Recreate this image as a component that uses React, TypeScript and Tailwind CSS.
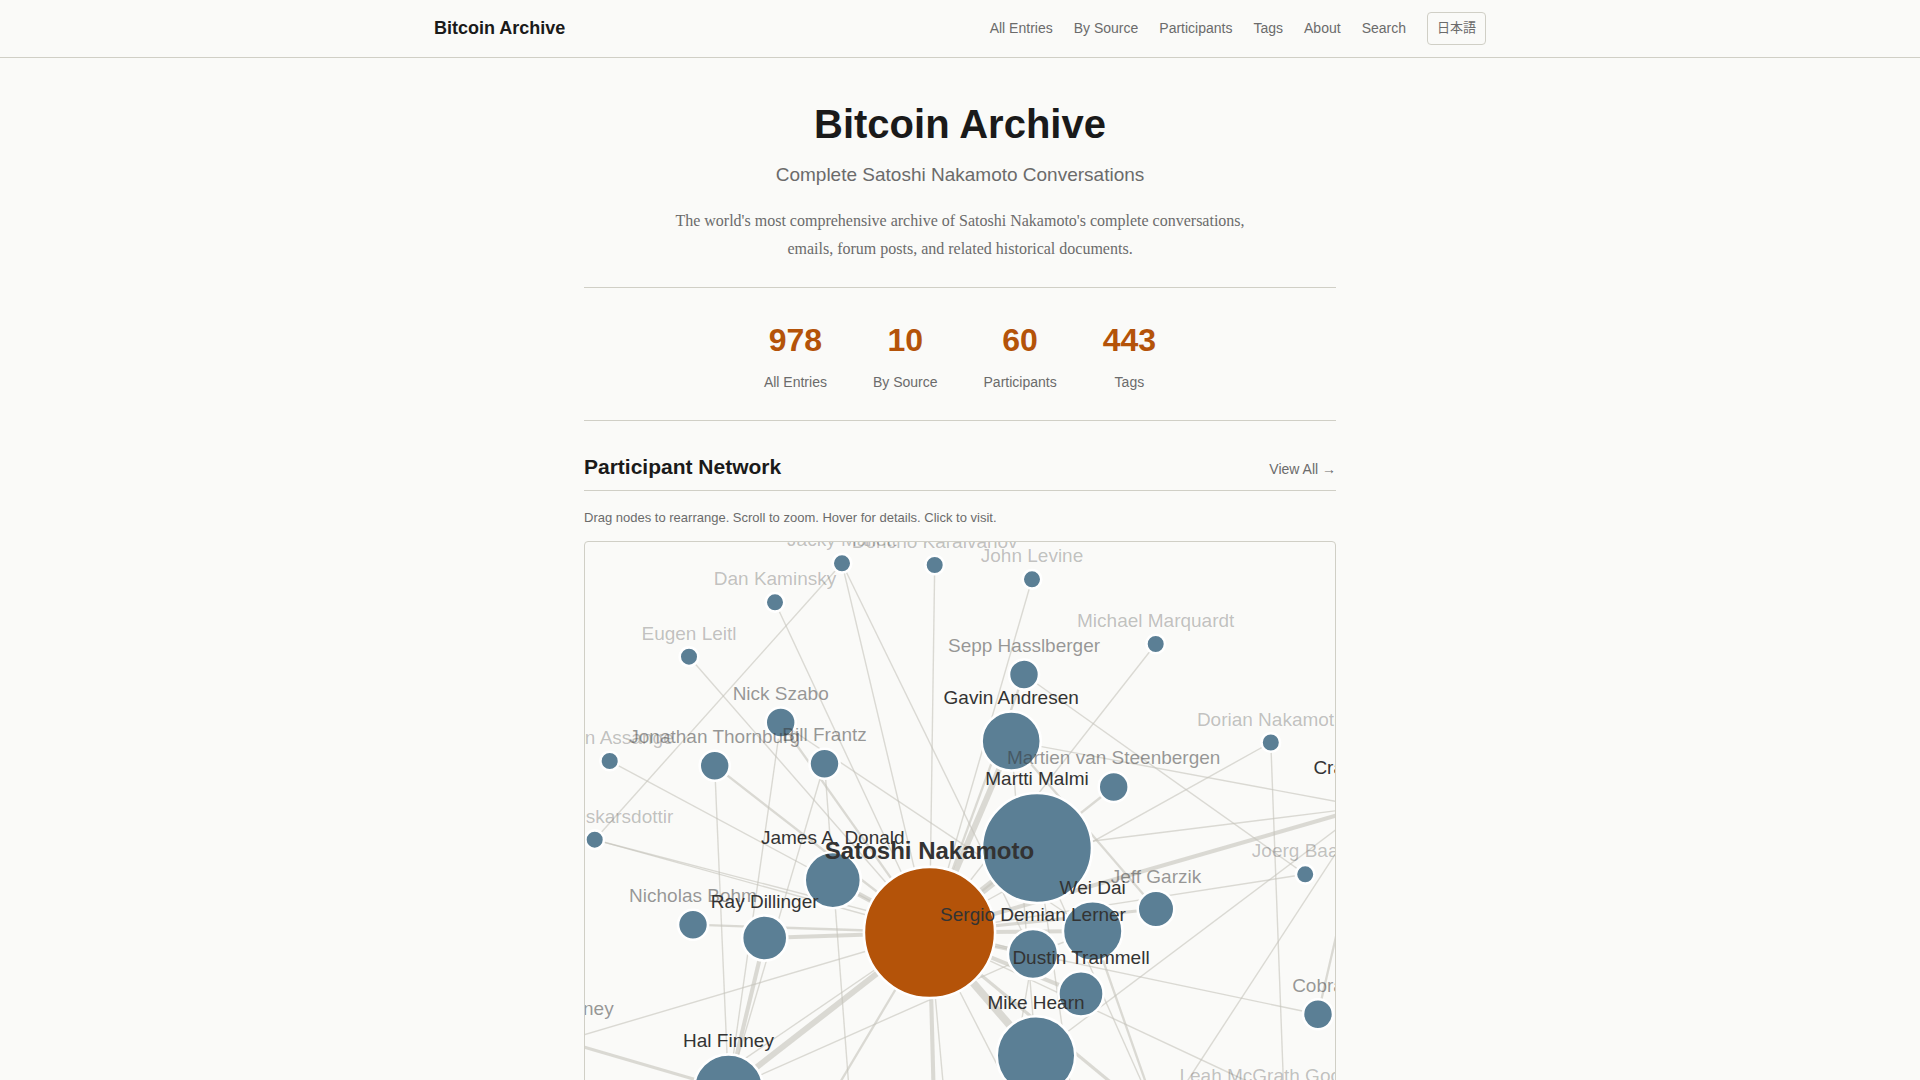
import React from 'react';

type NetworkNode = {
  id: string;
  name: string;
  x: number;
  y: number;
  r: number;
  main?: boolean;
};

// id of a node, or a bare point for neighbours that sit outside the canvas
type End = string | [number, number];

const navItems = ['All Entries', 'By Source', 'Participants', 'Tags', 'About', 'Search'];

const stats = [
  { value: 978, label: 'All Entries' },
  { value: 10, label: 'By Source' },
  { value: 60, label: 'Participants' },
  { value: 443, label: 'Tags' },
];

const nodes: NetworkNode[] = [
  { id: 'jacky', name: 'Jacky Mallett', x: 257, y: 21.3, r: 8 },
  { id: 'doncho', name: 'Doncho Karaivanov', x: 349.7, y: 23, r: 8 },
  { id: 'levine', name: 'John Levine', x: 447, y: 37.3, r: 8 },
  { id: 'dan', name: 'Dan Kaminsky', x: 190, y: 60.3, r: 8 },
  { id: 'eugen', name: 'Eugen Leitl', x: 104, y: 114.7, r: 8 },
  { id: 'marquardt', name: 'Michael Marquardt', x: 570.7, y: 102, r: 8 },
  { id: 'dorian', name: 'Dorian Nakamoto', x: 685.8, y: 200.5, r: 8 },
  { id: 'assange', name: 'Julian Assange', x: 24.7, y: 219, r: 8 },
  { id: 'oskar', name: 'Smári Óskarsdottir', x: 9.7, y: 297.7, r: 8 },
  { id: 'joerg', name: 'Joerg Baach', x: 720.2, y: 332.3, r: 8 },
  { id: 'leah', name: 'Leah McGrath Goodman', x: 699, y: 556.5, r: 8 },
  { id: 'sepp', name: 'Sepp Hasslberger', x: 439, y: 132.5, r: 13.7 },
  { id: 'nick', name: 'Nick Szabo', x: 195.7, y: 180.5, r: 13.7 },
  { id: 'jonathan', name: 'Jonathan Thornburg', x: 129.7, y: 223.7, r: 13.7 },
  { id: 'bill', name: 'Bill Frantz', x: 239.5, y: 221.7, r: 13.7 },
  { id: 'martien', name: 'Martien van Steenbergen', x: 528.7, y: 245, r: 13.7 },
  { id: 'bohm', name: 'Nicholas Bohm', x: 108, y: 382.7, r: 13.7 },
  { id: 'cobra', name: 'Cobra', x: 733, y: 472.3, r: 13.7 },
  { id: 'fran', name: 'Fran Finney', x: -22, y: 499, r: 17 },
  { id: 'jeff', name: 'Jeff Garzik', x: 571, y: 367, r: 17 },
  { id: 'ray', name: 'Ray Dillinger', x: 179.7, y: 396, r: 21.3 },
  { id: 'dustin', name: 'Dustin Trammell', x: 496, y: 451.9, r: 21.3 },
  { id: 'sergio', name: 'Sergio Demian Lerner', x: 448, y: 412, r: 23.8 },
  { id: 'craig', name: 'Craig Wright', x: 781, y: 265, r: 24 },
  { id: 'james', name: 'James A. Donald', x: 247.8, y: 338.1, r: 26.8 },
  { id: 'gavin', name: 'Gavin Andresen', x: 426.2, y: 199, r: 28.3 },
  { id: 'wei', name: 'Wei Dai', x: 507.7, y: 389, r: 28.5 },
  { id: 'hal', name: 'Hal Finney', x: 143.5, y: 547.2, r: 33.5 },
  { id: 'mike', name: 'Mike Hearn', x: 451, y: 513.5, r: 38 },
  { id: 'martti', name: 'Martti Malmi', x: 452, y: 306, r: 53.7 },
  { id: 'satoshi', name: 'Satoshi Nakamoto', x: 344.5, y: 390.5, r: 64.3, main: true },
];

const links: [End, End, number][] = [
  ['satoshi', 'doncho', 1],
  ['satoshi', 'jacky', 1],
  ['satoshi', 'levine', 1],
  ['satoshi', 'dan', 1],
  ['satoshi', 'eugen', 1],
  ['satoshi', 'marquardt', 1],
  ['satoshi', 'dorian', 1],
  ['satoshi', 'assange', 1],
  ['satoshi', 'oskar', 1],
  ['satoshi', 'joerg', 1],
  ['satoshi', 'leah', 1],
  ['satoshi', 'cobra', 1],
  ['satoshi', 'fran', 1],
  ['satoshi', 'sepp', 2],
  ['satoshi', 'nick', 2],
  ['satoshi', 'jonathan', 2],
  ['satoshi', 'martien', 2],
  ['satoshi', 'bohm', 2],
  ['satoshi', 'jeff', 3],
  ['satoshi', 'ray', 4],
  ['satoshi', 'dustin', 4],
  ['satoshi', 'sergio', 4],
  ['satoshi', 'craig', 4],
  ['satoshi', 'james', 5],
  ['satoshi', 'wei', 4],
  ['satoshi', 'gavin', 6],
  ['satoshi', 'hal', 6],
  ['satoshi', 'mike', 8],
  ['satoshi', 'martti', 8],
  ['satoshi', [575, 581], 3],
  ['satoshi', [351, 640], 4],
  ['satoshi', [367, 640], 1],
  ['satoshi', [470, 636], 1],
  ['satoshi', [198, 636], 2],
  ['satoshi', [0, 626], 1],
  ['jacky', 'oskar', 1],
  ['jacky', 'sergio', 1],
  ['oskar', 'sergio', 1],
  ['nick', 'hal', 1],
  ['nick', 'wei', 1],
  ['bill', 'hal', 1],
  ['bill', [271, 640], 1],
  ['jonathan', 'hal', 1],
  ['sepp', 'joerg', 1],
  ['gavin', 'craig', 1],
  ['gavin', 'mike', 1],
  ['gavin', 'jeff', 2],
  ['martti', 'craig', 1],
  ['martti', [499, 640], 1],
  ['martti', [575, 581], 1],
  ['wei', [575, 581], 2],
  ['sergio', 'wei', 1],
  ['sergio', 'hal', 1],
  ['sergio', [409, 640], 1],
  ['mike', 'craig', 1],
  ['craig', 'cobra', 2],
  ['craig', [575, 581], 1],
  ['dorian', 'leah', 1],
  ['ray', 'hal', 4],
  ['hal', 'fran', 3],
];

const byId = new Map(nodes.map((n) => [n.id, n]));

function locate(end: End): [number, number] {
  if (typeof end !== 'string') return end;
  const n = byId.get(end)!;
  return [n.x, n.y];
}

function labelOpacity(r: number) {
  if (r < 10) return 0.3;
  if (r < 20) return 0.5;
  return 1;
}

function SiteHeader() {
  return (
    <header className="border-b border-[#d0cfc6]">
      <div className="max-w-[1100px] mx-auto px-6 py-3 flex items-center justify-between">
        <a href="#" className="pb-0.5 text-lg leading-6 font-bold text-[#1a1a1a]">Bitcoin Archive</a>
        <nav className="flex items-center gap-[21px] text-sm text-[#6b6b6b]">
          {navItems.map((item) => (
            <a key={item} href="#" className="pb-0.5 hover:text-[#1a1a1a]">{item}</a>
          ))}
          <button className="h-[33px] px-[9px] text-[13px] border border-[#d0cfc6] rounded">日本語</button>
        </nav>
      </div>
    </header>
  );
}

function NetworkGraph() {
  return (
    <div className="mt-[13px] h-[602px] border border-[#d0cfc6] rounded overflow-hidden">
      <svg className="block w-full h-full" role="img" aria-label="Participant Network">
        <g stroke="#c4c3ba" strokeOpacity={0.6}>
          {links.map(([from, to, width], i) => {
            const [x1, y1] = locate(from);
            const [x2, y2] = locate(to);
            return <line key={i} x1={x1} y1={y1} x2={x2} y2={y2} strokeWidth={width * 0.9 + 0.5} />;
          })}
        </g>
        <g stroke="#ffffff" strokeWidth={2.6}>
          {nodes.map((n) => (
            <circle key={n.id} cx={n.x} cy={n.y} r={n.r + 1.3} fill={n.main ? '#b45309' : '#5b7f95'} className="cursor-pointer" />
          ))}
        </g>
        <g fill="#333333" textAnchor="middle">
          {nodes.map((n) => (
            <text
              key={n.id}
              x={n.x}
              y={n.y - n.r - 9}
              fillOpacity={labelOpacity(n.r)}
              className={n.main ? 'text-2xl font-bold' : 'text-[19px]'}
            >
              {n.name}
            </text>
          ))}
        </g>
      </svg>
    </div>
  );
}

export default function App() {
  return (
    <div className="min-h-screen bg-[#fafaf8] text-[#1a1a1a] font-['Liberation_Sans','Noto_Sans_CJK_JP',sans-serif]">
      <SiteHeader />
      <main className="max-w-[800px] mx-auto px-6 pt-10 pb-16">
        <section className="pb-6 border-b border-[#d0cfc6] text-center">
          <h1 className="text-[40px] leading-[52px] font-bold">Bitcoin Archive</h1>
          <p className="mt-[11px] text-[19px] leading-7 text-[#6b6b6b]">Complete Satoshi Nakamoto Conversations</p>
          <p className="mt-[18px] max-w-[600px] mx-auto text-base leading-7 text-[#6b6b6b] font-['Liberation_Serif',serif]">
            The world's most comprehensive archive of Satoshi Nakamoto's complete conversations, emails, forum posts, and related historical documents.
          </p>
        </section>

        <section className="pt-8 pb-7 border-b border-[#d0cfc6] flex justify-center gap-[46px] text-center">
          {stats.map((s) => (
            <div key={s.label}>
              <div className="text-[32px] leading-10 font-bold text-[#b45309]">{s.value}</div>
              <div className="mt-3 text-sm leading-5 text-[#6b6b6b]">{s.label}</div>
            </div>
          ))}
        </section>

        <section className="mt-[31px]">
          <div className="pb-2 flex items-baseline justify-between border-b border-[#d0cfc6]">
            <h2 className="text-[21px] leading-[30px] font-bold">Participant Network</h2>
            <a href="#" className="text-sm leading-5 text-[#6b6b6b]">View All →</a>
          </div>
          <p className="mt-[17px] text-[13px] leading-5 text-[#6b6b6b]">
            Drag nodes to rearrange. Scroll to zoom. Hover for details. Click to visit.
          </p>
          <NetworkGraph />
        </section>
      </main>
    </div>
  );
}
